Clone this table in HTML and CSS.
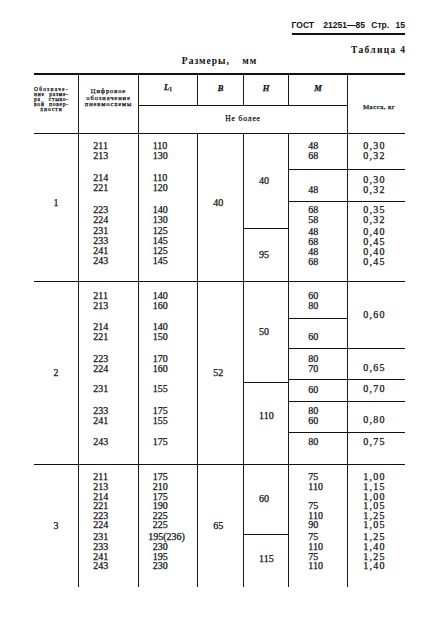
FILE: index.html
```html
<!DOCTYPE html>
<html lang="ru">
<head>
<meta charset="utf-8">
<title>ГОСТ 21251—85 Стр. 15</title>
<link rel="stylesheet" href="styles.css">
</head>
<body>
<div class="page">
  <div class="doc-head"><span class="gost">ГОСТ</span> 21251—85 Стр. 15</div>
  <div class="tab-no">Таблица 4</div>
  <div class="tab-title">Размеры, мм</div>
  <div class="table">
    <div class="thead">
      <div class="c1 r12 h-desig">
        <div class="hl first">Обозначе-</div>
        <div class="hl just">ние разме-</div>
        <div class="hl just">ра стыко-</div>
        <div class="hl just">вой повер-</div>
        <div class="hl ctr">хности</div>
      </div>
      <div class="c2 r12 h-code">Цифровое<br>обозначение<br>пневмосхемы</div>
      <div class="c3 r1 h-sym"><span><i>L</i><sub>1</sub></span></div>
      <div class="c4 r1 h-sym"><i>B</i></div>
      <div class="c5 r1 h-sym"><i>H</i></div>
      <div class="c6 r1 h-sym"><i>M</i></div>
      <div class="c36 r2 bt h-max">Не более</div>
      <div class="c7 r12 h-mass">Масса, кг</div>
    </div>

    <div class="grp g1">
      <div class="c1 rall mid up">1</div>
      <div class="c2 rall pt7h">
        <div>211<br>213</div>
        <div class="mt12">214<br>221</div>
        <div class="mt12">223<br>224</div>
        <div class="mt1">231<br>233<br>241<br>243</div>
      </div>
      <div class="c3 rall pt7h">
        <div>110<br>130</div>
        <div class="mt12">110<br>120</div>
        <div class="mt12">140<br>130</div>
        <div class="mt1">125<br>145<br>125<br>145</div>
      </div>
      <div class="c4 rall mid up">40</div>
      <div class="c5 r13 mid">40</div>
      <div class="c5 r4 bt mid">95</div>
      <div class="c6 r1 pt7h">48<br>68</div>
      <div class="c6 r2 bt pt15">48</div>
      <div class="c6 r34 bt pt3h">
        <div>68<br>58</div>
        <div class="mt1h">48<br>68<br>48<br>68</div>
      </div>
      <div class="c7 r1 pt7h">0,30<br>0,32</div>
      <div class="c7 r2 bt pt5">0,30<br>0,32</div>
      <div class="c7 r34 bt pt3h">
        <div>0,35<br>0,32</div>
        <div class="mt1h">0,40<br>0,45<br>0,40<br>0,45</div>
      </div>
    </div>

    <div class="grp g2">
      <div class="c1 rall mid">2</div>
      <div class="c2 rall pt9h">
        <div>211<br>213</div>
        <div class="mt11">214<br>221</div>
        <div class="mt11h">223<br>224</div>
        <div class="mt10h">231</div>
        <div class="mt11h">233<br>241</div>
        <div class="mt11">243</div>
      </div>
      <div class="c3 rall pt9h">
        <div>140<br>160</div>
        <div class="mt11">140<br>150</div>
        <div class="mt11h">170<br>160</div>
        <div class="mt10h">155</div>
        <div class="mt11h">175<br>155</div>
        <div class="mt11">175</div>
      </div>
      <div class="c4 rall mid">52</div>
      <div class="c5 r14 mid">50</div>
      <div class="c5 r57 bt pt28h">110</div>
      <div class="c6 r1 pt9h">60<br>80</div>
      <div class="c6 r2 bt pt13">60</div>
      <div class="c6 r3 bt pt5">80<br>70</div>
      <div class="c6 r45 bt pt5">60</div>
      <div class="c6 r6 bt pt4h">80<br>60</div>
      <div class="c6 r7 bt pt4h">80</div>
      <div class="c7 r12 mid">0,60</div>
      <div class="c7 r3 bt pt14">0,65</div>
      <div class="c7 r45 bt pt4">0,70</div>
      <div class="c7 r6 bt pt13">0,80</div>
      <div class="c7 r7 bt pt4">0,75</div>
    </div>

    <div class="grp g3">
      <div class="c1 rall mid">3</div>
      <div class="c2 rall pt7 dense">
        <div>211<br>213<br>214<br>221<br>223<br>224</div>
        <div class="mt2h">231<br>233<br>241<br>243</div>
      </div>
      <div class="c3 rall pt7 dense">
        <div>175<br>210<br>175<br>190<br>225<br>225</div>
        <div class="mt2h"><span class="wide">195(236)</span><br>230<br>195<br>230</div>
      </div>
      <div class="c4 rall mid">65</div>
      <div class="c5 r1 mid">60</div>
      <div class="c5 r2 bt mid up4">115</div>
      <div class="c6 rall pt7 dense">
        <div>75<br>110<br>&nbsp;<br>75<br>110<br>90</div>
        <div class="mt2h">75<br>110<br>75<br>110</div>
      </div>
      <div class="c7 rall pt7 dense">
        <div>1,00<br>1,15<br>1,00<br>1,05<br>1,25<br>1,05</div>
        <div class="mt2h">1,25<br>1,40<br>1,25<br>1,40</div>
      </div>
    </div>
  </div>
</div>
</body>
</html>
```

FILE: styles.css
```css
* { box-sizing: border-box; }
html, body { margin: 0; padding: 0; background: #fff; }
body {
  font-family: "Liberation Serif", "Times New Roman", serif;
  font-size: 10px;
  line-height: 10px;
  color: #111;
  width: 426px;
  height: 633px;
  overflow: hidden;
}
.page {
  width: 371px;
  margin-left: 34px;
  display: flex;
  flex-direction: column;
}
.doc-head {
  align-self: flex-end;
  margin-top: 20px;
  padding-bottom: 3px;
  border-bottom: 2px solid #111;
  font-family: "Liberation Sans", Arial, sans-serif;
  font-weight: bold;
  font-size: 8.5px;
  line-height: 10px;
  word-spacing: 4px;
  white-space: nowrap;
}
.gost { margin-right: 3px; }
.tab-no {
  align-self: flex-end;
  margin-top: 9.6px;
  margin-right: -1.3px;
  font-weight: bold;
  font-size: 9.5px;
  letter-spacing: 1.3px;
  white-space: nowrap;
}
.tab-title {
  align-self: center;
  margin-top: 1.8px;
  font-weight: bold;
  font-size: 9.5px;
  letter-spacing: 1px;
  word-spacing: 9px;
  white-space: nowrap;
}
.table {
  margin-top: 6.6px;
  border-top: 2px solid #111;
  -webkit-text-stroke: 0.25px #111;
}
.thead, .grp {
  display: grid;
  grid-template-columns: 44px 60px 59px 46px 45px 59px 58px;
}
.thead { grid-template-rows: 30px 28px; }
.grp { border-top: 1px solid #111; }
.g1 { grid-template-rows: 35px 32px 27px 53px; }
.g2 { grid-template-rows: 36px 30px 31px 3px 19px 31px 32px; }
.g3 { grid-template-rows: 69px 53px; }

.c1 { grid-column: 1; }
.c2 { grid-column: 2; }
.c3 { grid-column: 3; }
.c4 { grid-column: 4; }
.c5 { grid-column: 5; }
.c6 { grid-column: 6; }
.c7 { grid-column: 7; }
.c36 { grid-column: 3 / 7; }
.c2, .c3, .c4, .c5, .c6, .c7, .c36 { border-left: 1px solid #1a1a1a; }

.rall { grid-row: 1 / -1; }
.r1 { grid-row: 1; }
.r2 { grid-row: 2; }
.r3 { grid-row: 3; }
.r4 { grid-row: 4; }
.r6 { grid-row: 6; }
.r7 { grid-row: 7; }
.r12 { grid-row: 1 / 3; }
.r13 { grid-row: 1 / 4; }
.r14 { grid-row: 1 / 5; }
.r34 { grid-row: 3 / 5; }
.r45 { grid-row: 4 / 6; }
.r57 { grid-row: 5 / 8; }

.bt { border-top: 1px solid #111; }
.mid { display: flex; flex-direction: column; justify-content: center; }
.up { padding-bottom: 8.4px; }
.up4 { padding-bottom: 4px; }

.pt3h { padding-top: 3.5px; }
.pt4 { padding-top: 4px; }
.pt4h { padding-top: 4.5px; }
.pt5 { padding-top: 5px; }
.pt7 { padding-top: 7.4px; }
.pt7h { padding-top: 7.5px; }
.pt9h { padding-top: 9.5px; }
.pt13 { padding-top: 13px; }
.pt14 { padding-top: 14px; }
.pt15 { padding-top: 15px; }
.pt28h { padding-top: 28.5px; }

.mt1 { margin-top: 1px; }
.mt1h { margin-top: 1.5px; }
.mt2h { margin-top: 2.5px; }
.mt10h { margin-top: 10.5px; }
.mt11 { margin-top: 11px; }
.mt11h { margin-top: 11.5px; }
.mt12 { margin-top: 12px; }

.dense { line-height: 9.6px; }

.grp .c1 { text-align: center; }
.grp .c2 { padding-left: 14.3px; }
.grp .c3 { padding-left: 13.7px; }
.grp .c4 { padding-left: 15.3px; }
.grp .c5 { padding-left: 15px; }
.grp .c6 { padding-left: 19.3px; }
.grp .c7 { padding-left: 15.3px; letter-spacing: 1.2px; }
.wide { margin-left: -4.5px; }

/* header */
.h-desig {
  display: flex;
  flex-direction: column;
  justify-content: center;
  padding-bottom: 8px;
  font-size: 5.5px;
  line-height: 5px;
}
.hl { width: 35px; white-space: nowrap; }
.hl.first { letter-spacing: 1.2px; }
.hl.just { letter-spacing: 0.8px; text-align: justify; text-align-last: justify; white-space: normal; }
.hl.ctr { letter-spacing: 1px; text-align: center; }
.h-code {
  display: flex;
  flex-direction: column;
  justify-content: center;
  text-align: center;
  padding-bottom: 12px;
  font-size: 6.5px;
  line-height: 6.4px;
  letter-spacing: 0.9px;
}
.h-sym {
  display: flex;
  align-items: center;
  justify-content: center;
  padding-bottom: 3px;
  font-size: 8.5px;
  font-weight: bold;
}
.h-sym sub { font-size: 5.5px; vertical-align: -1px; font-weight: bold; }
.h-max {
  display: flex;
  align-items: center;
  justify-content: center;
  font-size: 7.5px;
  letter-spacing: 0.9px;
}
.h-mass {
  display: flex;
  flex-direction: column;
  justify-content: center;
  padding-left: 15px;
  padding-top: 6px;
  font-size: 7px;
  letter-spacing: 0.4px;
}
```
